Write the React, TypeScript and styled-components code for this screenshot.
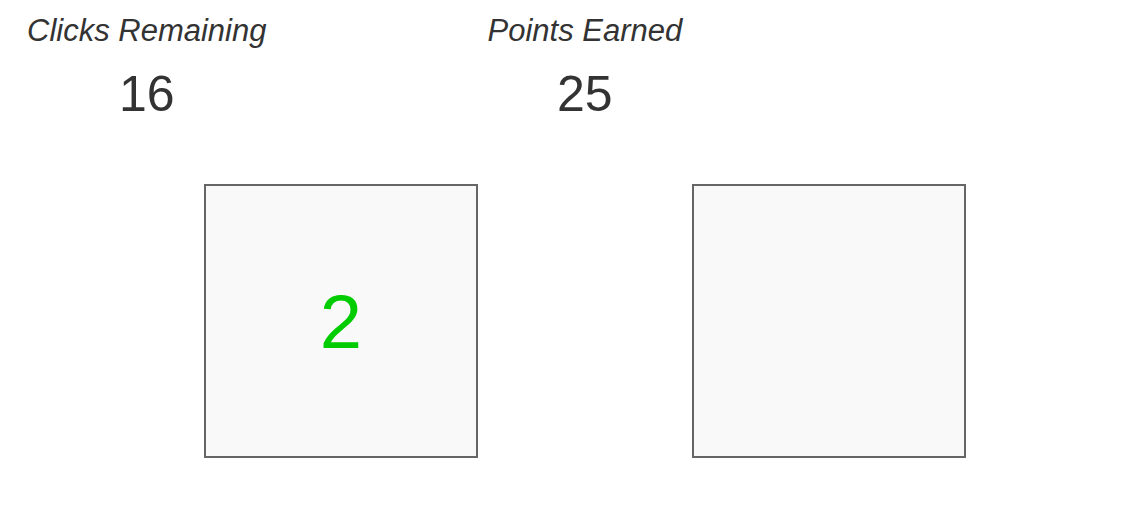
import React from "react";
import styled, { createGlobalStyle } from "styled-components";

const Global = createGlobalStyle`
  html, body { margin: 0; padding: 0; background: #ffffff; }
  body { font-family: "Liberation Sans", Arial, sans-serif; color: #333333; }
`;

const Page = styled.div`
  width: 1138px;
  height: 520px;
  display: flex;
  flex-direction: column;
`;

const StatsRow = styled.div`
  display: flex;
  padding: 13px 0 0 27px;
  gap: 221px;
`;

const Stat = styled.div`
  display: flex;
  flex-direction: column;
  align-items: center;
`;

const Label = styled.div`
  font-style: italic;
  font-size: 31px;
  line-height: 36px;
  white-space: nowrap;
`;

const Value = styled.div`
  font-size: 50px;
  line-height: 58px;
  margin-top: 16px;
`;

const Boxes = styled.div`
  display: flex;
  gap: 214px;
  padding: 61px 0 0 204px;
`;

const Box = styled.div`
  box-sizing: border-box;
  width: 274px;
  height: 274px;
  border: 2px solid #666666;
  background: #f9f9f9;
  display: flex;
  align-items: center;
  justify-content: center;
  font-size: 76px;
  color: #00cc00;
`;

export default function App() {
  return (
    <>
      <Global />
      <Page>
        <StatsRow>
          <Stat>
            <Label>Clicks Remaining</Label>
            <Value>16</Value>
          </Stat>
          <Stat>
            <Label>Points Earned</Label>
            <Value>25</Value>
          </Stat>
        </StatsRow>
        <Boxes>
          <Box>2</Box>
          <Box />
        </Boxes>
      </Page>
    </>
  );
}
